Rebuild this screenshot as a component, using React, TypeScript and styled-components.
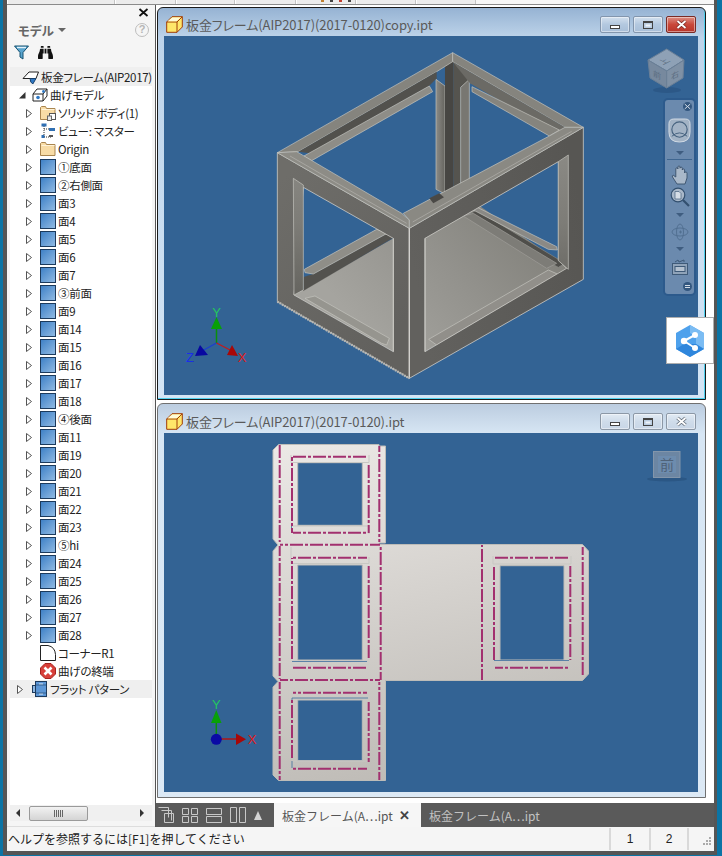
import React from "react";
import styled, { createGlobalStyle } from "styled-components";
import { FaBinoculars } from "react-icons/fa";

const Global = createGlobalStyle`
  html, body { margin: 0; padding: 0; background: #0b74a5; }
  body { font-family: "Noto Sans CJK JP", "Noto Sans", sans-serif; }
  * { box-sizing: border-box; }
`;

const Shell = styled.div`
  width: 722px; height: 856px; overflow: hidden;
  background: #0b74a5; padding: 0 5px 1px 3px;
`;
const Frame = styled.div`
  width: 714px; height: 855px; background: #555;
  padding: 0 3px 4px 4px; display: flex; flex-direction: column;
`;
const TopStrip = styled.div`
  height: 5px; display: flex; background: #f7f7f7; border-bottom: 1px solid #8b8b8b; flex: none;
`;
const TopTab = styled.div<{ $w: number }>`
  width: ${p => p.$w}px; height: 4px; background: #ececec; border-right: 1px solid #c4c4c4;
  border-left: 1px solid #fff; display: flex; gap: 6px; padding-left: 24px; flex: none;
`;
const TopMark = styled.span<{ $c: string }>`
  width: 3px; height: 2px; background: ${p => p.$c};
`;
const Main = styled.div`
  flex: 1; display: flex; min-height: 0;
`;
const Sidebar = styled.aside`
  width: 148px; flex: none; background: #f5f5f5; display: flex; flex-direction: column;
  border-bottom: 1px solid #ddd;
`;
const CloseRow = styled.div`
  height: 14px; display: flex; justify-content: flex-end; align-items: center; padding: 0 5px 0 0;
  flex: none;
`;
const TitleRow = styled.div`
  height: 22px; display: flex; align-items: center; padding: 0 4px 0 11px; flex: none;
`;
const PanelTitle = styled.span`
  font-size: 12.5px; color: #666; font-weight: 700; font-feature-settings: "palt";
`;
const Caret = styled.span<{ $c?: string; $up?: boolean }>`
  display: inline-block; width: 0; height: 0;
  border-left: 4px solid transparent; border-right: 4px solid transparent;
  ${p => p.$up ? `border-bottom: 9px solid ${p.$c ?? "#666"};` : `border-top: 4px solid ${p.$c ?? "#666"};`}
`;
const TitleCaret = styled(Caret)`
  margin-left: 4px;
`;
const HelpDot = styled.span`
  margin-left: auto; width: 14px; height: 14px; border-radius: 50%; border: 1.5px solid #bdbdbd;
  color: #b5b5b5; font: bold 11px/11px "Liberation Sans", sans-serif; text-align: center;
  margin-right: 2px;
`;
const ToolRow = styled.div`
  height: 22px; display: flex; align-items: center; padding-left: 7px; gap: 9px; flex: none; margin-bottom: 4px;
`;
const Tree = styled.div`
  flex: 1; background: #fff; margin: 0 3px; min-height: 0;
`;
const Row = styled.div<{ $indent: number; $hl?: boolean; $tall?: boolean }>`
  height: ${p => (p.$tall ? 19 : 18)}px; display: flex; align-items: center; padding-left: ${p => p.$indent}px;
  background: ${p => (p.$hl ? "#efefef" : "transparent")}; white-space: nowrap;
`;
const Expander = styled.span<{ $w: number }>`
  width: ${p => p.$w}px; flex: none; display: flex; align-items: center;
`;
const IconSlot = styled.span<{ $w: number }>`
  width: ${p => p.$w}px; height: 16px; flex: none; margin-right: 2px; display: flex;
`;
const Label = styled.span`
  font-size: 11.5px; line-height: 18px; color: #222; font-feature-settings: "palt"; letter-spacing: -.3px;
`;
const HScroll = styled.div`
  height: 16px; flex: none; margin: 0 3px 5px; background: #f0f0f0; display: flex; align-items: center;
  padding-left: 6px;
`;
const ScrollArrow = styled.span<{ $left?: boolean }>`
  width: 0; height: 0; flex: none; border-top: 4px solid transparent; border-bottom: 4px solid transparent;
  ${p => p.$left ? "border-right: 4px solid #333; margin-right: 9px;" : "border-left: 4px solid #333;"}
`;
const ScrollThumb = styled.div`
  width: 59px; height: 15px; flex: none; border: 1px solid #9a9a9a; border-radius: 2px;
  background: linear-gradient(#f2f2f2, #d4d4d4); display: flex; justify-content: center; align-items: center; gap: 1px;
  margin-right: 52px;
`;
const Grip = styled.i`
  width: 1px; height: 7px; background: #666;
`;
const Mdi = styled.div`
  flex: 1; min-width: 0; display: flex; flex-direction: column; border-left: 1px solid #555; position: relative; background: #fff;
`;
const Windows = styled.div`
  flex: 1; padding: 2px 8px 5px 1px; display: flex; flex-direction: column; gap: 3px; min-height: 0;
`;
const Win = styled.section<{ $active?: boolean; $h: number; $pb: number }>`
  height: ${p => p.$h}px; width: 549px; flex: none; padding: 0 7px ${p => p.$pb}px 6px;
  border-radius: 6px 6px 0 0; display: flex; flex-direction: column; position: relative;
  background: ${p => p.$active ? "linear-gradient(#96b3d3, #bed4ea 30px, #d4e5f5)" : "linear-gradient(#bccde0, #d7e6f4 30px, #dce9f5)"};
  border: 1px solid ${p => p.$active ? "#1a1a1a" : "#707070"};
  ${p => p.$active ? "box-shadow: inset -1px -1px 0 #4fd0ee;" : ""}
`;
const TitleBar = styled.header<{ $h: number; $pt: number }>`
  height: ${p => p.$h}px; flex: none; display: flex; align-items: center; padding-top: ${p => p.$pt}px; margin: 0 0 0 2px;
`;
const WinTitle = styled.span`
  font-size: 13px; color: #5a5a5a; margin-left: 3px; flex: 1; white-space: nowrap; font-feature-settings: "palt"; letter-spacing: -.1px;
`;
const WinBtns = styled.div`
  display: flex; gap: 3px; margin-right: 2px;
`;
const WinBtn = styled.button<{ $close?: boolean }>`
  width: 30px; height: 17px; padding: 0; border-radius: 2px; display: flex; align-items: center; justify-content: center;
  border: 1px solid ${p => p.$close ? "#7a2b26" : "#8396ad"};
  background: ${p => p.$close ? "linear-gradient(#dc8f84, #c9483a 50%, #b8352a)" : "linear-gradient(#d3e0ee, #b3c8df 50%, #a8bfd8)"};
  box-shadow: inset 0 0 0 1px rgba(255,255,255,.45);
`;
const InactiveBtn = styled(WinBtn)`
  background: linear-gradient(#e2ebf4, #cfdcea 50%, #c8d6e6);
  border-color: #8c98a6;
`;
const MinBar = styled.i`
  width: 10px; height: 4px; margin-top: 5px; background: #fff; border: 1px solid #444;
`;
const RestoreBox = styled.i`
  width: 10px; height: 8px; background: #eef3f8; border: 1px solid #444; border-top-width: 2px;
  box-shadow: inset 0 0 0 1.5px #b9cce0;
`;
const Viewport = styled.div`
  flex: 1; background: #336394; position: relative; min-height: 0; line-height: 0;
`;
const Scene = styled.svg`
  width: 100%; height: 100%; display: block;
`;
const NavBar = styled.nav`
  position: absolute; left: 499px; top: 62px; width: 33px; height: 198px; border-radius: 5px;
  background: #6b8aae; border: 2px solid #2c5a8c; display: flex; flex-direction: column; align-items: center;
  line-height: 0;
`;
const NavCell = styled.div<{ $h: number; $end?: boolean }>`
  height: ${p => p.$h}px; width: 100%; flex: none; display: flex; align-items: center;
  justify-content: ${p => p.$end ? "flex-end" : "center"}; padding-right: ${p => p.$end ? "2px" : "0"};
`;
const NavSep = styled.div`
  height: 1px; width: 25px; background: #3f6690; margin: 1px 0 2px; flex: none;
`;
const SmallDot = styled.span`
  width: 9px; height: 9px; border-radius: 50%; background: #33577f; color: #c6d2df; display: flex;
  align-items: center; justify-content: center;
`;
const DotBar = styled.i`
  width: 5px; height: 3px; border-top: 1px solid #d3dce6; border-bottom: 1px solid #d3dce6;
`;
const ShareBadge = styled.div`
  position: absolute; left: 502px; top: 281px; width: 48px; height: 47px; background: #fff; border: 1px solid #aeaeae;
  display: flex; align-items: center; justify-content: center; z-index: 3; line-height: 0;
`;
const TabBar = styled.div`
  height: 24px; flex: none; background: #5a5a5a; display: flex; align-items: stretch;
`;
const LayoutIcons = styled.div`
  width: 118px; display: flex; align-items: center; padding-left: 2px; gap: 8px; flex: none; line-height: 0;
`;
const Tab = styled.div<{ $active?: boolean; $w: number }>`
  width: ${p => p.$w}px; flex: none; display: flex; align-items: center; padding-left: 8px;
  font-size: 12px; white-space: nowrap;
  background: ${p => p.$active ? "#f6f6f6" : "transparent"};
  color: ${p => p.$active ? "#555" : "#c2c2c2"};
`;
const TabClose = styled.b`
  margin-left: 6px; color: #444; font: bold 13px/13px "Liberation Sans", sans-serif;
`;
const Status = styled.footer`
  height: 24px; flex: none; background: #f5f5f5; display: flex; align-items: center; font-size: 12px; color: #222;
`;
const StatusText = styled.div`
  width: 604px; height: 22px; line-height: 22px; padding-left: 1px; border-right: 2px solid #d9d9d9; flex: none; white-space: nowrap;
`;
const StatusCell = styled.div<{ $w: number }>`
  width: ${p => p.$w}px; height: 22px; line-height: 22px; text-align: center; border-right: 2px solid #d9d9d9; flex: none;
  font-family: "Liberation Sans", sans-serif;
`;
const GripBox = styled.div`
  flex: 1; height: 22px; display: flex; justify-content: flex-end; align-items: flex-end; line-height: 0; padding: 0 2px 2px 0;
`;

/* ---------- icons ---------- */
const FaceIcon = () => (
  <svg width="16" height="16" viewBox="0 0 16 16">
    <defs><linearGradient id="fc" x1="0" y1="0" x2="1" y2="1"><stop offset="0" stopColor="#3c7fc6" /><stop offset="1" stopColor="#93bce4" /></linearGradient></defs>
    <rect x=".5" y=".5" width="15" height="15" fill="url(#fc)" stroke="#1c3a5c" />
  </svg>
);
const FolderIcon = ({ body }: { body?: boolean }) => (
  <svg width="16" height="16" viewBox="0 0 16 16">
    <path d="M.5 14.5V2.5l1-1h4l1 2h8.5v11z" fill="#f8dca6" stroke="#a9854f" />
    <path d="M1.5 4.5h13" stroke="#fff3d8" />
    {body && <><rect x="9.5" y="8.5" width="6" height="6" fill="#fff" stroke="#555" /><rect x="7.5" y="11" width="4" height="4.5" fill="#e8e8e8" stroke="#666" /></>}
  </svg>
);
const ViewIcon = () => (
  <svg width="16" height="16" viewBox="0 0 16 16" fill="none">
    <path d="M4 3v11M4 6h5M4 14h7" stroke="#333" strokeDasharray="1 1" />
    <rect x="1.5" y="0.5" width="5" height="3" fill="#2f6fb3" />
    <rect x="9" y="5" width="6" height="3" fill="#2f6fb3" />
    <rect x="1.5" y="12" width="3" height="3" fill="#2f6fb3" />
    <rect x="9" y="12" width="4" height="2" fill="#555" />
  </svg>
);
const CornerIcon = () => (
  <svg width="16" height="16" viewBox="0 0 16 16">
    <path d="M.5 .5H8Q15 2 15.5 9.5v6H.5z" fill="#fff" stroke="#222" />
  </svg>
);
const ErrorIcon = () => (
  <svg width="16" height="16" viewBox="0 0 16 16">
    <path d="M5 .5h6L15.5 5v6L11 15.5H5L.5 11V5z" fill="#d8403a" stroke="#a62420" />
    <path d="M4.5 4.5l7 7M11.5 4.5l-7 7" stroke="#fff" strokeWidth="2.6" />
  </svg>
);
const FlatIcon = () => (
  <svg width="16" height="16" viewBox="0 0 16 16">
    <rect x=".5" y="4.5" width="3" height="7" fill="#8fb8e2" stroke="#1c3a5c" />
    <rect x="3.5" y=".5" width="11" height="15" fill="#5b96d6" stroke="#1c3a5c" />
    <path d="M7 3h4M7 13h4" stroke="#dfeaf5" />
    <path d="M3.5 4h11M3.5 12h11" stroke="#1c3a5c" strokeWidth=".6" />
  </svg>
);
const PartIcon = () => (
  <svg width="17" height="16" viewBox="0 0 17 16">
    <path d="M1 9.5L7 3h9.5L14 9.5z" fill="#fff" stroke="#222" />
    <path d="M8 9.5h6l-3.2 5.5-2-2z" fill="#2f78c4" stroke="#17406b" />
  </svg>
);
const FoldIcon = () => (
  <svg width="16" height="16" viewBox="0 0 16 16">
    <path d="M1 7l4-5h10v7l-4 5H1z" fill="#fff" stroke="#222" />
    <path d="M1 7h10v7M11 7l4-5" fill="none" stroke="#222" />
    <circle cx="6" cy="10.5" r="1.8" fill="#2f78c4" />
    <circle cx="11.5" cy="4.5" r="1.4" fill="#2f78c4" />
  </svg>
);
const TriOpen = () => (
  <svg width="6" height="9" viewBox="0 0 6 9"><path d="M.5.5v8l5-4z" fill="#fff" stroke="#555" /></svg>
);
const TriFilled = () => (
  <svg width="7" height="7" viewBox="0 0 7 7"><path d="M6.5 0v6.5H0z" fill="#333" /></svg>
);
const CubeIcon = () => (
  <svg width="17" height="17" viewBox="0 0 17 17" style={{ flex: "none" }}>
    <path d="M.7 6L6 .7h10.3V11L11 16.3H.7z" fill="#ffe66a" stroke="#a03c06" />
    <path d="M.7 6H11v10.3" fill="none" stroke="#a03c06" />
    <path d="M11 6l5.3-5.3" stroke="#a03c06" />
    <path d="M1.5 5.3L6.3 1.5h8.6L10.5 5.3z" fill="#fffbd8" />
  </svg>
);
const XGlyph = ({ c, w = 2.4, edge }: { c: string; w?: number; edge?: string }) => (
  <svg width="13" height="11" viewBox="0 0 13 11">
    {edge && <path d="M2.5 2l8 7M10.5 2l-8 7" stroke={edge} strokeWidth={w + 1.6} />}
    <path d="M2.5 2l8 7M10.5 2l-8 7" stroke={c} strokeWidth={w} />
  </svg>
);
const Funnel = () => (
  <svg width="15" height="15" viewBox="0 0 15 15">
    <path d="M.5 1h14L9 7.5V14l-3-2V7.5z" fill="#5aa5cf" stroke="#15506f" />
    <path d="M3 2.5h9" stroke="#e3f2fa" strokeWidth="1.4" />
  </svg>
);

/* ---------- tree data ---------- */
type Kind = "face" | "folder" | "body" | "view" | "corner" | "error" | "flat" | "part" | "fold";
interface Node { label: string; kind: Kind; exp?: boolean }
const faces = ["①底面", "②右側面", "面3", "面4", "面5", "面6", "面7", "③前面", "面9", "面14", "面15", "面16", "面17", "面18", "④後面", "面11", "面19", "面20", "面21", "面22", "面23", "⑤hi", "面24", "面25", "面26", "面27", "面28"];
const level3: Node[] = [
  { label: "ソリッド ボディ(1)", kind: "body", exp: true },
  { label: "ビュー: マスター", kind: "view", exp: true },
  { label: "Origin", kind: "folder", exp: true },
  ...faces.map<Node>(label => ({ label, kind: "face", exp: true })),
  { label: "コーナーR1", kind: "corner" },
  { label: "曲げの終端", kind: "error" },
];
const iconFor = (k: Kind) => {
  switch (k) {
    case "face": return <FaceIcon />;
    case "folder": return <FolderIcon />;
    case "body": return <FolderIcon body />;
    case "view": return <ViewIcon />;
    case "corner": return <CornerIcon />;
    case "error": return <ErrorIcon />;
    case "flat": return <FlatIcon />;
    case "part": return <PartIcon />;
    default: return <FoldIcon />;
  }
};

/* ---------- model drawings ---------- */
const Poly = ({ p, f, s = "#c6c5c0", w = 2 }: { p: string; f: string; s?: string; w?: number }) => (
  <polygon points={p} fill={f} stroke={s} strokeWidth={w} strokeLinejoin="round" />
);
const Frame3D = () => (
  <g transform="translate(270 50) scale(.33333)">
    <defs>
      <linearGradient id="floor" gradientUnits="userSpaceOnUse" x1="300" y1="860" x2="720" y2="480">
        <stop offset="0" stopColor="#a5a49f" /><stop offset=".55" stopColor="#93928d" /><stop offset="1" stopColor="#84837d" />
      </linearGradient>
      <linearGradient id="faceL" gradientUnits="userSpaceOnUse" x1="22" y1="400" x2="418" y2="800">
        <stop offset="0" stopColor="#6e6d69" /><stop offset="1" stopColor="#62615e" />
      </linearGradient>
      <linearGradient id="faceR" gradientUnits="userSpaceOnUse" x1="418" y1="600" x2="940" y2="500">
        <stop offset="0" stopColor="#62615e" /><stop offset="1" stopColor="#575653" />
      </linearGradient>
      <linearGradient id="flangeV" gradientUnits="userSpaceOnUse" x1="0" y1="320" x2="0" y2="720">
        <stop offset="0" stopColor="#8a8984" /><stop offset=".5" stopColor="#7d7c77" /><stop offset="1" stopColor="#676661" />
      </linearGradient>
      <linearGradient id="post" x1="0" y1="0" x2="1" y2="0">
        <stop offset="0" stopColor="#8c8b86" /><stop offset="1" stopColor="#65645f" />
      </linearGradient>
    </defs>
    <polygon points="70,735 590,440 895,655 465,905 370,905" fill="url(#floor)" />
    <Poly p="100,722 100,682 130,672 360,545 372,562" f="#53524e" s="#53524e" w={1} />
    <Poly p="103,658 320,538 355,548 130,672 105,668" f="#8f8e88" />
    <Poly p="585,500 620,480 885,640 865,652" f="#4f4e4a" s="#8a8985" />
    <Poly p="622,472 860,590 862,600 835,598 610,480" f="#8a8985" />
    <Poly p="580,498 610,490 860,640 830,655" f="#7d7c77" s="#a09f9a" />
    <Poly p="498,88 525,108 525,432 498,418" f="url(#post)" />
    <polygon points="525,30 550,35 550,440 525,440" fill="#474643" />
    <polygon points="550,35 600,90 572,112 572,420 550,435" fill="#55544f" />
    <Poly p="572,112 598,88 598,395 572,415" f="#787772" />
    <Poly p="22,308 548,8 548,35 500,65 85,305" f="#85847e" />
    <polygon points="85,305 500,65 500,85 475,110 120,310" fill="#52514d" />
    <Poly p="102,318 478,108 488,125 125,332" f="#8e8d87" />
    <Poly p="548,8 940,232 885,232 548,35" f="#85847e" />
    <polygon points="548,35 885,232 860,250 600,100" fill="#6b6a65" />
    <Poly p="606,110 868,240 838,258 606,125" f="#85847e" />
    <Poly p="105,745 135,738 358,865 350,885 335,880" f="#96958f" />
    <Poly p="476,868 835,660 862,672 500,885" f="#918f8a" />
    <path fillRule="evenodd" d="M22 308L418 535V985L22 755ZM100 412L370 565V905L72 735Z" fill="url(#faceL)" stroke="#c9c8c3" strokeWidth="2.5" />
    <path fillRule="evenodd" d="M418 535L940 232V688L418 985ZM465 565L865 335V630L890 655L465 905Z" fill="url(#faceR)" stroke="#c9c8c3" strokeWidth="2.5" />
    <Poly p="70,385 100,405 100,720 72,735" f="url(#flangeV)" />
    <Poly p="865,335 895,315 895,658 865,632" f="url(#flangeV)" />
    <Poly p="22,308 80,305 395,490 418,510 418,535" f="#8d8c86" />
    <Poly p="418,535 418,510 400,490 838,258 885,232 940,232" f="#8a8983" />
    <polygon points="478,445 508,430 522,442 490,460" fill="#4a4946" />
    <path d="M60 318L410 520M428 516L905 244" stroke="#b3b2ad" strokeWidth="2" fill="none" />
    <path d="M418 535V985" stroke="#d6d5d1" strokeWidth="3.5" />
    <path d="M22 755L418 985" stroke="#b8b7b2" strokeWidth="7" strokeDasharray="5 3" />
    <path d="M370 565V905M465 565V905" stroke="#cfcec9" strokeWidth="2.5" />
  </g>
);
const Triad3D = () => (
  <g fontFamily="Liberation Sans, sans-serif" fontSize="13">
    <path d="M216.5 343V322" stroke="#0a8f0a" strokeWidth="1.5" />
    <path d="M216.5 343L202 351" stroke="#1b3fd0" strokeWidth="1.2" />
    <path d="M216.5 343L232 351" stroke="#c41a1a" strokeWidth="1.2" />
    <path d="M211 329L216.5 317L222 329Z" fill="#08a008" />
    <path d="M195 356L200 345L208 355Z" fill="#0808a0" />
    <path d="M227 355L232 345L238 356Z" fill="#a80808" />
    <text x="216.5" y="317" textAnchor="middle" fill="#22c75f">Y</text>
    <text x="190" y="362" textAnchor="middle" fill="#1a2ee8">Z</text>
    <text x="242" y="362" textAnchor="middle" fill="#e01c1c">X</text>
  </g>
);
const ViewCube = () => (
  <g>
    <ellipse cx="667" cy="90" rx="14" ry="3" fill="#28527f" opacity=".6" />
    <polygon points="666.7,49 684,60 666.7,71 648,60" fill="#8ea1b6" stroke="#6a7f96" />
    <polygon points="648,60 666.7,71 666.7,88 650,78" fill="#77899e" stroke="#6a7f96" />
    <polygon points="684,60 666.7,71 666.7,88 683,78" fill="#7f91a5" stroke="#6a7f96" />
    <g fontFamily="Noto Sans CJK JP, sans-serif" fontSize="8" fill="#5b6d81" textAnchor="middle">
      <text transform="translate(666.7 63) matrix(1 -.5 1 .5 0 0)">上</text>
      <text transform="translate(657 78) matrix(1 .5 0 1 0 0)">前</text>
      <text transform="translate(675 78) matrix(1 -.5 0 1 0 0)">右</text>
    </g>
  </g>
);
const DASH = "13 2 3 2";
const vLines = [
  [279.7, 445, 542], [279.7, 546, 679], [279.7, 682, 780],
  [292, 457, 533], [292, 558, 660], [292, 700, 760],
  [368.7, 463, 533], [368.7, 566, 658], [368.7, 702, 762],
  [379.3, 446, 542], [379.3, 682, 780], [380.7, 545, 680],
  [482, 545, 680], [494, 566, 660], [570.3, 566, 660], [582.7, 547, 677],
];
const hLines = [
  [293, 367, 456.7], [293, 367, 532.7], [280, 380, 544.7], [293, 367, 557.7],
  [293, 367, 667.7], [280, 380, 680], [293, 367, 692.7], [293, 367, 768.7],
  [495, 569, 557.7], [495, 569, 667.7],
];
const FlatPattern = () => (
  <g>
    <defs>
      <linearGradient id="sheet" gradientUnits="userSpaceOnUse" x1="300" y1="444" x2="380" y2="781">
        <stop offset="0" stopColor="#ebe8e5" /><stop offset="1" stopColor="#bfbcb7" />
      </linearGradient>
    </defs>
    <path
      fillRule="evenodd"
      fill="url(#sheet)"
      stroke="#bdbcb8"
      strokeWidth="1"
      d="M278.5 444.5H379V446H385.5V543H379V544.5H582.5L588.5 551V674L582.5 680.5H385.5V780.5H278.5L273 775V687L278 681.5L273 676V551L278 545L273 539V450Z
         M297.7 462.7H362.3V525.3H297.7Z
         M297.7 565H362.3V660H297.7Z
         M297.7 700H362.3V760.7H297.7Z
         M500 565.7H564V660H500Z"
    />
    <path d="M291 455V462.5H369V455M291 526H369V534M291 547V563.5H369V557M292 661H368M292 693V698.5H368V692M292 761H368M493 556V564H571V556M493 661H571" fill="none" stroke="#c8c7c3" />
    <path d="M291.5 526V533M292 661.5H367M292 700V698H368M292 761V768M494 660.5H569" fill="none" stroke="#3d6f9f" strokeWidth=".8" />
    {vLines.map(([x, a, b], i) => (
      <path key={`v${i}`} d={`M${x} ${a}V${b}`} stroke="#a2306f" strokeWidth="2" strokeDasharray={DASH} strokeDashoffset={i * 3} />
    ))}
    {hLines.map(([a, b, y], i) => (
      <path key={`h${i}`} d={`M${a} ${y}H${b}`} stroke="#a2306f" strokeWidth="2" strokeDasharray={DASH} strokeDashoffset={i * 5} />
    ))}
  </g>
);
const FlatTriad = () => (
  <g fontFamily="Liberation Sans, sans-serif" fontSize="13">
    <path d="M216.3 739V718" stroke="#0a8f0a" strokeWidth="1.5" />
    <path d="M216.3 739H236" stroke="#b01515" strokeWidth="1.5" />
    <path d="M211 723L216.3 710L221.5 723Z" fill="#08a008" />
    <path d="M236 733.5L246 739.3L236 745Z" fill="#a80808" />
    <circle cx="216.3" cy="739.3" r="5.5" fill="#0a0aa5" />
    <text x="216.3" y="709" textAnchor="middle" fill="#22c75f">Y</text>
    <text x="252" y="744" textAnchor="middle" fill="#e01c1c">X</text>
  </g>
);
const FrontCube = () => (
  <g>
    <ellipse cx="667" cy="479" rx="20" ry="2.5" fill="#28527f" opacity=".7" />
    <rect x="653.5" y="451.5" width="26.5" height="26" fill="#6c86a3" stroke="#8295aa" />
    <rect x="658" y="456" width="18" height="17" fill="#6d8cae" />
    <text x="667" y="470" textAnchor="middle" fontFamily="Noto Sans CJK JP, sans-serif" fontSize="14" fill="#4f6278">前</text>
  </g>
);

const Hexagon = () => (
  <svg width="28" height="32" viewBox="0 0 28 32">
    <path d="M14 0L28 8V24L14 32L0 24V8Z" fill="#4ea1ec" />
    <path d="M14 0L28 8V24L20 19V12L14 8Z" fill="#7bbcf3" />
    <path d="M0 24L14 32L28 24L20 19H8Z" fill="#2f86dc" />
    <path d="M8 16L19 10M8 16L19 23" stroke="#fff" strokeWidth="2" />
    <circle cx="8" cy="16" r="3.2" fill="#fff" /><circle cx="19" cy="10" r="3" fill="#fff" /><circle cx="19" cy="23" r="3" fill="#fff" />
  </svg>
);
const NavStroke = "#d8e0e9";
const Wheel = () => (
  <svg width="23" height="25" viewBox="0 0 24 26">
    <path d="M6 1H18Q23 1 23 6V15Q23 25 12 25Q1 25 1 15V6Q1 1 6 1Z" fill="#a3b3c5" stroke="#d4dde6" />
    <circle cx="12" cy="12" r="8" fill="#a3b3c5" stroke="#46627f" strokeWidth="1.2" />
    <path d="M4 19Q12 12 20 19" fill="none" stroke="#46627f" />
  </svg>
);
const HandIcon = () => (
  <svg width="18" height="20" viewBox="0 0 18 20" fill="#a9b8c9" stroke="#39506b" strokeWidth=".9">
    <path d="M6 19L1.5 12Q.8 10.5 2.2 10.2L4.8 12V4Q4.8 2.8 5.8 2.8T6.9 4V2Q6.9 1 8 1T9 2V3.2Q9 2.2 10.2 2.2T11.3 3.2V5Q11.3 4 12.4 4T13.6 5V8Q13.6 7 14.8 7T16 8.2V13L14 19Z" />
  </svg>
);
const ZoomIcon = () => (
  <svg width="20" height="20" viewBox="0 0 20 20">
    <circle cx="8" cy="8" r="6.8" fill="#a9b8c9" stroke="#33506f" strokeWidth="1.2" />
    <path d="M5 4.5h4l2 2v5.5H5z" fill="#d5dde6" stroke="#45607d" strokeWidth=".7" />
    <path d="M13 13l6 6" stroke="#33506f" strokeWidth="2.2" />
  </svg>
);
const OrbitIcon = () => (
  <svg width="18" height="18" viewBox="0 0 18 18" fill="none" stroke="#4f6d8f" strokeWidth=".9">
    <ellipse cx="9" cy="9" rx="8" ry="4" /><ellipse cx="9" cy="9" rx="3.5" ry="8" />
    <path d="M8 9h3M9.5 7.5v3" />
  </svg>
);
const ViewBtn = () => (
  <svg width="16" height="16" viewBox="0 0 16 16">
    <path d="M3 3l3-2 1 2 5-2v2" fill="none" stroke="#3e5a78" />
    <rect x=".5" y="4.5" width="15" height="11" fill="#8fa3b9" stroke="#3e5a78" />
    <rect x="3" y="7.5" width="10" height="5" fill="#b3c1d0" stroke="#3e5a78" />
  </svg>
);
const LayoutGlyph = ({ d }: { d: string }) => (
  <svg width="16" height="16" viewBox="0 0 16 16"><path d={d} fill="none" stroke="#c8c8c8" /></svg>
);

const TOP_TABS: [number, string[]][] = [[108, []], [61, []], [59, []], [61, []], [60, ["#c08030", "#444", "#c04030", "#444"]], [60, []], [60, []]];

export default function App() {
  return (
    <>
      <Global />
      <Shell>
        <Frame>
          <TopStrip>
            {TOP_TABS.map(([w, marks], i) => (
              <TopTab key={i} $w={w}>
                {marks.map((c, j) => <TopMark key={j} $c={c} />)}
              </TopTab>
            ))}
          </TopStrip>
          <Main>
            <Sidebar>
              <CloseRow><XGlyph c="#111" w={1.8} /></CloseRow>
              <TitleRow>
                <PanelTitle>モデル</PanelTitle>
                <TitleCaret $c="#666" />
                <HelpDot>?</HelpDot>
              </TitleRow>
              <ToolRow>
                <Funnel />
                <FaBinoculars size={15} color="#111" />
              </ToolRow>
              <Tree>
                <Row $indent={12} $hl $tall>
                  <IconSlot $w={17}>{iconFor("part")}</IconSlot>
                  <Label>板金フレーム(AIP2017)</Label>
                </Row>
                <Row $indent={9}>
                  <Expander $w={13}><TriFilled /></Expander>
                  <IconSlot $w={16}>{iconFor("fold")}</IconSlot>
                  <Label>曲げモデル</Label>
                </Row>
                {level3.map(n => (
                  <Row key={n.label} $indent={16}>
                    <Expander $w={14}>{n.exp && <TriOpen />}</Expander>
                    <IconSlot $w={16}>{iconFor(n.kind)}</IconSlot>
                    <Label>{n.label}</Label>
                  </Row>
                ))}
                <Row $indent={7} $hl>
                  <Expander $w={15}><TriOpen /></Expander>
                  <IconSlot $w={16}>{iconFor("flat")}</IconSlot>
                  <Label>フラット パターン</Label>
                </Row>
              </Tree>
              <HScroll>
                <ScrollArrow $left />
                <ScrollThumb><Grip /><Grip /><Grip /><Grip /><Grip /></ScrollThumb>
                <ScrollArrow />
              </HScroll>
            </Sidebar>
            <Mdi>
              <Windows>
                <Win $active $h={393} $pb={4}>
                  <TitleBar $h={28} $pt={5}>
                    <CubeIcon />
                    <WinTitle>板金フレーム(AIP2017)(2017-0120)copy.ipt</WinTitle>
                    <WinBtns>
                      <WinBtn aria-label="min"><MinBar /></WinBtn>
                      <WinBtn aria-label="restore"><RestoreBox /></WinBtn>
                      <WinBtn $close aria-label="close"><XGlyph c="#fff" edge="#7a2b26" w={1.8} /></WinBtn>
                    </WinBtns>
                  </TitleBar>
                  <Viewport>
                    <Scene viewBox="164 36 534 359">
                      <Frame3D />
                      <Triad3D />
                      <ViewCube />
                    </Scene>
                    <NavBar>
                      <NavCell $h={12} $end><SmallDot><XGlyph c={NavStroke} w={1.4} /></SmallDot></NavCell>
                      <NavCell $h={36}><Wheel /></NavCell>
                      <NavCell $h={10}><Caret $c="#3f5d80" /></NavCell>
                      <NavSep />
                      <NavCell $h={26}><HandIcon /></NavCell>
                      <NavCell $h={18}><ZoomIcon /></NavCell>
                      <NavCell $h={18}><Caret $c="#3f5d80" /></NavCell>
                      <NavCell $h={16}><OrbitIcon /></NavCell>
                      <NavCell $h={18}><Caret $c="#3f5d80" /></NavCell>
                      <NavCell $h={18}><ViewBtn /></NavCell>
                      <NavCell $h={20} $end><SmallDot><DotBar /></SmallDot></NavCell>
                    </NavBar>
                    <ShareBadge><Hexagon /></ShareBadge>
                  </Viewport>
                </Win>
                <Win $h={395} $pb={5}>
                  <TitleBar $h={29} $pt={6}>
                    <CubeIcon />
                    <WinTitle>板金フレーム(AIP2017)(2017-0120).ipt</WinTitle>
                    <WinBtns>
                      <InactiveBtn aria-label="min"><MinBar /></InactiveBtn>
                      <InactiveBtn aria-label="restore"><RestoreBox /></InactiveBtn>
                      <InactiveBtn aria-label="close"><XGlyph c="#fff" edge="#5f6a76" w={1.8} /></InactiveBtn>
                    </WinBtns>
                  </TitleBar>
                  <Viewport>
                    <Scene viewBox="164 433 534 359">
                      <FlatPattern />
                      <FlatTriad />
                      <FrontCube />
                    </Scene>
                  </Viewport>
                </Win>
              </Windows>
              <TabBar>
                <LayoutIcons>
                  <LayoutGlyph d="M.5 .5h10v10M3.5 3.5h10v10M6.5 6.5h9v9h-9z" />
                  <LayoutGlyph d="M.5 1.5h6v6h-6zM9.5 1.5h6v6h-6zM.5 9.5h6v6h-6zM9.5 9.5h6v6h-6z" />
                  <LayoutGlyph d="M.5 1.5h15v6h-15zM.5 9.5h15v6h-15z" />
                  <LayoutGlyph d="M.5 .5h6v15h-6zM9.5 .5h6v15h-6z" />
                  <Caret $up $c="#d4d4d4" />
                </LayoutIcons>
                <Tab $active $w={147}>板金フレーム(A⋯ipt<TabClose>✕</TabClose></Tab>
                <Tab $w={140}>板金フレーム(A⋯ipt</Tab>
              </TabBar>
            </Mdi>
          </Main>
          <Status>
            <StatusText>ヘルプを参照するには[F1]を押してください</StatusText>
            <StatusCell $w={40}>1</StatusCell>
            <StatusCell $w={38}>2</StatusCell>
            <GripBox>
              <svg width="12" height="12" viewBox="0 0 12 12" fill="#aaa">
                <rect x="9" y="1" width="2" height="2" /><rect x="6" y="4" width="2" height="2" /><rect x="9" y="4" width="2" height="2" />
                <rect x="3" y="7" width="2" height="2" /><rect x="6" y="7" width="2" height="2" /><rect x="9" y="7" width="2" height="2" />
              </svg>
            </GripBox>
          </Status>
        </Frame>
      </Shell>
    </>
  );
}
